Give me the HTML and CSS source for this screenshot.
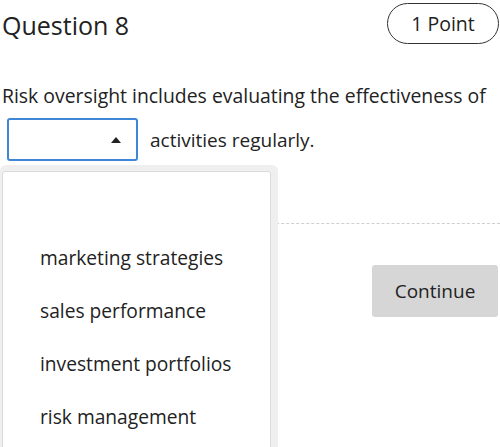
FILE: index.html
```html
<!DOCTYPE html>
<html>
<head>
<meta charset="utf-8">
<link rel="stylesheet" href="styles.css">
</head>
<body>
<div class="page">
  <header class="head">
    <h1 class="title">Question 8</h1>
    <div class="pill">1 Point</div>
  </header>
  <p class="question">Risk oversight includes evaluating the effectiveness of</p>
  <div class="answer-row">
    <div class="select-wrap">
      <div class="select">
        <svg class="caret" width="10" height="6" viewBox="0 0 10 6"><path d="M0 6 L5 0 L10 6 Z" fill="#222"/></svg>
      </div>
      <div class="dropdown">
        <ul class="menu">
          <li class="opt">marketing strategies</li>
          <li class="opt">sales performance</li>
          <li class="opt">investment portfolios</li>
          <li class="opt">risk management</li>
        </ul>
      </div>
    </div>
    <span class="after">activities regularly.</span>
  </div>
  <div class="divider"></div>
  <div class="actions">
    <button class="continue">Continue</button>
  </div>
</div>
</body>
</html>
```

FILE: styles.css
```css
html, body {
  margin: 0;
  padding: 0;
  background: #fff;
  overflow: hidden;
}
body {
  font-family: "Open Sans", "Liberation Sans", sans-serif;
  color: #222;
}
.page {
  width: 500px;
  height: 447px;
  position: relative;
}
.head {
  display: flex;
  justify-content: space-between;
  align-items: flex-start;
  padding: 3px 1px 0 2px;
}
.title {
  margin: 5px 0 0 0;
  font-size: 25px;
  font-weight: 500;
  line-height: 34px;
  color: #222;
}
.pill {
  width: 110px;
  height: 39px;
  border: 1px solid #333;
  border-radius: 21px;
  display: flex;
  align-items: center;
  justify-content: center;
  font-size: 19.5px;
  color: #222;
}
.question {
  margin: 39px 0 0 2px;
  font-size: 19.4px;
  line-height: 26px;
}
.answer-row {
  display: flex;
  align-items: center;
  margin-top: 9px;
  padding-left: 7px;
}
.select-wrap {
  position: relative;
}
.select {
  border: 2px solid #3d87d6;
  border-radius: 3px;
  display: flex;
  align-items: center;
  justify-content: flex-end;
  padding-right: 15px;
  box-sizing: border-box;
  width: 131px;
  height: 43px;
}
.caret {
  display: block;
}
.after {
  margin-left: 12px;
  font-size: 19px;
}
.dropdown {
  position: absolute;
  left: -7px;
  top: 47px;
  width: 278px;
  height: 300px;
  background: #efefef;
  border-radius: 6px;
  padding: 6px 7px 0 2px;
  box-sizing: border-box;
  z-index: 2;
}
.menu {
  list-style: none;
  margin: 0;
  padding: 74px 0 0 0;
  background: #fff;
  border: 1px solid #dadada;
  border-radius: 3px;
  height: 100%;
  box-sizing: border-box;
}
.opt {
  padding-left: 37px;
  font-size: 19.2px;
  line-height: 24px;
  height: 53px;
  color: #222;
}
.divider {
  margin-top: 62px;
  border-top: 1px dashed #cfcfcf;
}
.actions {
  display: flex;
  justify-content: flex-end;
  padding-right: 2px;
  margin-top: 41px;
}
.continue {
  width: 126px;
  height: 52px;
  background: #d6d6d6;
  border: none;
  border-radius: 3px;
  font-family: "Open Sans", "Liberation Sans", sans-serif;
  font-size: 19px;
  color: #222;
}
```
